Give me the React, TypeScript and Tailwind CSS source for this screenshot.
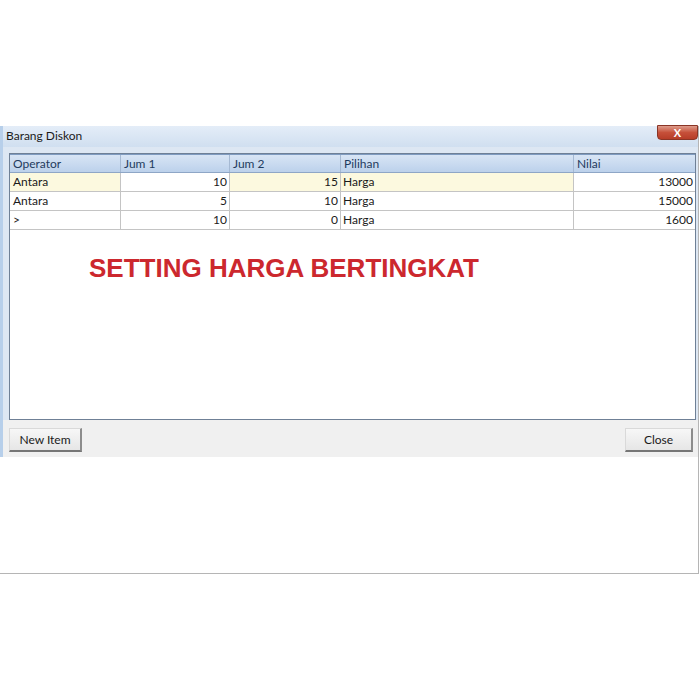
import React from 'react';

type Row = { op: string; j1: number; j2: number; pil: string; nilai: number };

const rows: Row[] = [
  { op: 'Antara', j1: 10, j2: 15, pil: 'Harga', nilai: 13000 },
  { op: 'Antara', j1: 5, j2: 10, pil: 'Harga', nilai: 15000 },
  { op: '>', j1: 10, j2: 0, pil: 'Harga', nilai: 1600 },
];

const cols = ['w-[111px]', 'w-[109px]', 'w-[111px]', 'w-[233px]', 'w-[121px]'];

function Btn({ label, width }: { label: string; width: string }) {
  return (
    <button
      className={`${width} h-[24px] text-[12px] text-[#1a1a1a] bg-gradient-to-b from-[#f7f7f7] to-[#e6e6e6] border-t border-l border-[#d9d9d9] border-r-2 border-b-2 border-r-[#8c8c8c] border-b-[#767676]`}
    >
      {label}
    </button>
  );
}

export default function App() {
  return (
    <div className="w-[700px] h-[700px] bg-white" style={{ fontFamily: 'Lato, "Noto Sans", sans-serif' }}>
      <div className="h-[126px]" />
      <div className="w-[699px] h-[448px] border-r border-b border-[#b5b5b5]">
        <div className="flex flex-col border-l-[3px] border-[#b7cfea]">
          {/* title bar */}
          <div className="h-[21px] flex items-start justify-between bg-gradient-to-b from-[#e4edf8] to-[#d0dff0]">
            <span className="pl-[3px] pt-[3px] text-[12px] leading-[14px] text-[#1b1b1b]">Barang Diskon</span>
            <div className="-mt-[1px] w-[41px] h-[15px] rounded-b-[4px] border border-[#8a3526] bg-gradient-to-b from-[#dd9c8c] via-[#c6503a] to-[#b63d28] flex items-center justify-center text-white text-[11px] font-bold leading-none">
              X
            </div>
          </div>

          {/* grid */}
          <div className="bg-[#dde7f3] pt-[6px] pl-[6px] pr-[2px]">
            <div className="h-[267px] border border-[#6f8096] bg-white flex flex-col">
              <div className="flex h-[19px] bg-gradient-to-b from-[#d8e5f5] to-[#bcd1eb] border-t border-[#7f9bc0] border-b border-b-[#8ea6c6] text-[12px] text-[#1f3b5e]">
                {['Operator', 'Jum 1', 'Jum 2', 'Pilihan', 'Nilai'].map((h, i) => (
                  <div key={h} className={`${cols[i]} pl-[3px] leading-[17px] ${i < 4 ? 'border-r border-[#a5b9d3]' : ''}`}>
                    {h}
                  </div>
                ))}
              </div>
              {rows.map((r, idx) => {
                const hi = idx === 0;
                return (
                  <div key={idx} className="flex h-[19px] border-b border-[#c4c4c4] text-[12px] text-[#1a1a1a] leading-[18px]">
                    <div className={`${cols[0]} pl-[3px] border-r border-[#c4c4c4] ${hi ? 'bg-[#fcf9df]' : ''}`}>{r.op}</div>
                    <div className={`${cols[1]} pr-[2px] text-right border-r border-[#c4c4c4]`}>{r.j1}</div>
                    <div className={`${cols[2]} pr-[2px] text-right border-r border-[#c4c4c4] ${hi ? 'bg-[#fcf9df]' : ''}`}>{r.j2}</div>
                    <div className={`${cols[3]} pl-[2px] border-r border-[#c4c4c4] ${hi ? 'bg-[#fcf9df]' : ''}`}>{r.pil}</div>
                    <div className={`${cols[4]} pr-[2px] text-right`}>{r.nilai}</div>
                  </div>
                );
              })}
              <div
                className="pl-[79px] mt-[25px] text-[26px] leading-none font-bold text-[#cc282e]"
                style={{ fontFamily: '"Liberation Sans", Arial, sans-serif' }}
              >
                SETTING HARGA BERTINGKAT
              </div>
            </div>
          </div>

          {/* footer */}
          <div className="h-[37px] bg-[#f0f0f0] flex items-start justify-between pt-[8px] pl-[6px] pr-[5px]">
            <Btn label="New Item" width="w-[73px]" />
            <Btn label="Close" width="w-[68px]" />
          </div>
        </div>
      </div>
    </div>
  );
}
